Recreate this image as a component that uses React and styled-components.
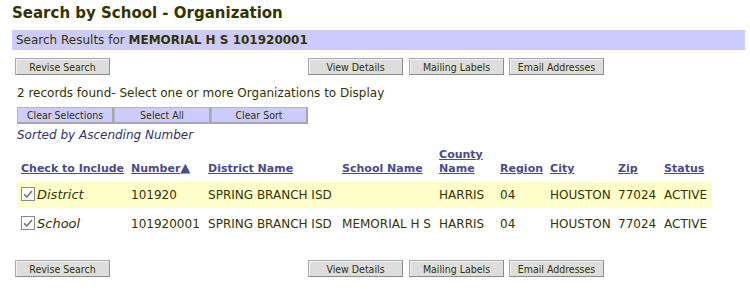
import React from 'react'
import styled, { createGlobalStyle } from 'styled-components'

const Global = createGlobalStyle`
  body {
    margin: 0;
    background: #fff;
    font-family: "DejaVu Sans", Verdana, sans-serif;
    color: #333300;
  }
`

const Page = styled.div`
  width: 750px;
  padding: 3px 5px 0 12px;
  box-sizing: border-box;
`

const Title = styled.h1`
  margin: 0;
  font-size: 15px;
  line-height: 20px;
  font-weight: bold;
  color: #333300;
`

const ResultBar = styled.div`
  margin-top: 7px;
  height: 20px;
  background: #ccccff;
  font-size: 12px;
  line-height: 20px;
  padding-left: 4px;
  b { font-weight: bold; }
`

const ButtonRow = styled.div`
  display: flex;
  align-items: center;
  margin: ${p => p.$top}px 0 0 3px;
`

const Btn = styled.button`
  width: 95px;
  height: 17px;
  padding: 0;
  margin-right: ${p => p.$gap || 0}px;
  margin-left: ${p => p.$push || 0}px;
  font-family: "DejaVu Sans Condensed", Tahoma, sans-serif;
  font-size: 10.5px;
  color: #333300;
  background: #dddddd;
  border: 1px solid #a9a9a9;
  border-right-color: #8c8c8c;
  border-bottom-color: #8c8c8c;
  box-shadow: inset 1px 1px 0 #f2f2f2;
`

const Found = styled.div`
  margin: 11px 0 0 5px;
  font-size: 12px;
  line-height: 14px;
`

const ToolRow = styled.div`
  display: flex;
  margin: 7px 0 0 5px;
`

const ToolBtn = styled.button`
  width: 97px;
  height: 17px;
  padding: 0;
  font-family: "DejaVu Sans Condensed", Tahoma, sans-serif;
  font-size: 10.5px;
  color: #333300;
  background: #ccccff;
  border: 1px solid #b4b4c4;
  border-right: 2px solid #a8a8a8;
  border-bottom: 2px solid #a8a8a8;
`

const Sorted = styled.div`
  margin: 4px 0 0 5px;
  font-size: 12px;
  line-height: 15px;
  font-style: italic;
  color: #333366;
`

const Grid = styled.table`
  margin: 5px 0 0 5px;
  border-collapse: collapse;
  font-size: 12px;
`

const Th = styled.th`
  text-align: left;
  vertical-align: bottom;
  padding: 0 3px 5px 4px;
  font-size: 11px;
  line-height: 14px;
  font-weight: bold;
  color: #4a4a8c;
  text-decoration: underline;
  white-space: ${p => (p.$wrap ? 'normal' : 'nowrap')};
  width: ${p => p.$w}px;
`

const Tr = styled.tr`
  background: ${p => (p.$hl ? '#ffffcc' : 'transparent')};
  height: 28px;
  border-top: ${p => (p.$hl ? 'none' : '2px solid #fff')};
`

const Td = styled.td`
  padding: 0 3px 0 4px;
  white-space: nowrap;
  vertical-align: middle;
`

const Kind = styled.span`
  display: inline-flex;
  align-items: center;
  gap: 2px;
  font-style: italic;
  font-size: 13px;
  padding-top: 2px;
`

const Arrow = styled.span`
  font-size: 13px;
  line-height: 12px;
  display: inline-block;
  text-decoration: none;
  color: #4a4a8c;
`

function Check() {
  return (
    <svg width="14" height="14" viewBox="0 0 14 14">
      <rect x="0.5" y="0.5" width="13" height="13" fill="#fff" stroke="#8a8a8a" />
      <path d="M3 7.2 L5.8 10 L11 4" fill="none" stroke="#6a6a6a" strokeWidth="1.4" />
    </svg>
  )
}

function Buttons({ top }) {
  return (
    <ButtonRow $top={top}>
      <Btn>Revise Search</Btn>
      <Btn $push={198} $gap={6}>View Details</Btn>
      <Btn $gap={5}>Mailing Labels</Btn>
      <Btn>Email Addresses</Btn>
    </ButtonRow>
  )
}

const rows = [
  { kind: 'District', num: '101920', dist: 'SPRING BRANCH ISD', school: '', hl: true },
  { kind: 'School', num: '101920001', dist: 'SPRING BRANCH ISD', school: 'MEMORIAL H S' },
]

export default function App() {
  return (
    <Page>
      <Global />
      <Title>Search by School - Organization</Title>
      <ResultBar>Search Results for <b>MEMORIAL H S 101920001</b></ResultBar>
      <Buttons top={8} />
      <Found>2 records found- Select one or more Organizations to Display</Found>
      <ToolRow>
        <ToolBtn>Clear Selections</ToolBtn>
        <ToolBtn>Select All</ToolBtn>
        <ToolBtn>Clear Sort</ToolBtn>
      </ToolRow>
      <Sorted>Sorted by Ascending Number</Sorted>
      <Grid>
        <thead>
          <tr>
            <Th $w={103}>Check to Include</Th>
            <Th $w={70}>Number<Arrow>▲</Arrow></Th>
            <Th $w={127}>District Name</Th>
            <Th $w={90}>School Name</Th>
            <Th $w={54} $wrap>County Name</Th>
            <Th $w={43}>Region</Th>
            <Th $w={61}>City</Th>
            <Th $w={39}>Zip</Th>
            <Th $w={45}>Status</Th>
          </tr>
        </thead>
        <tbody>
          {rows.map(r => (
            <Tr key={r.kind} $hl={r.hl}>
              <Td><Kind><Check />{r.kind}</Kind></Td>
              <Td>{r.num}</Td>
              <Td>{r.dist}</Td>
              <Td>{r.school}</Td>
              <Td>HARRIS</Td>
              <Td>04</Td>
              <Td>HOUSTON</Td>
              <Td>77024</Td>
              <Td>ACTIVE</Td>
            </Tr>
          ))}
        </tbody>
      </Grid>
      <Buttons top={23} />
    </Page>
  )
}
